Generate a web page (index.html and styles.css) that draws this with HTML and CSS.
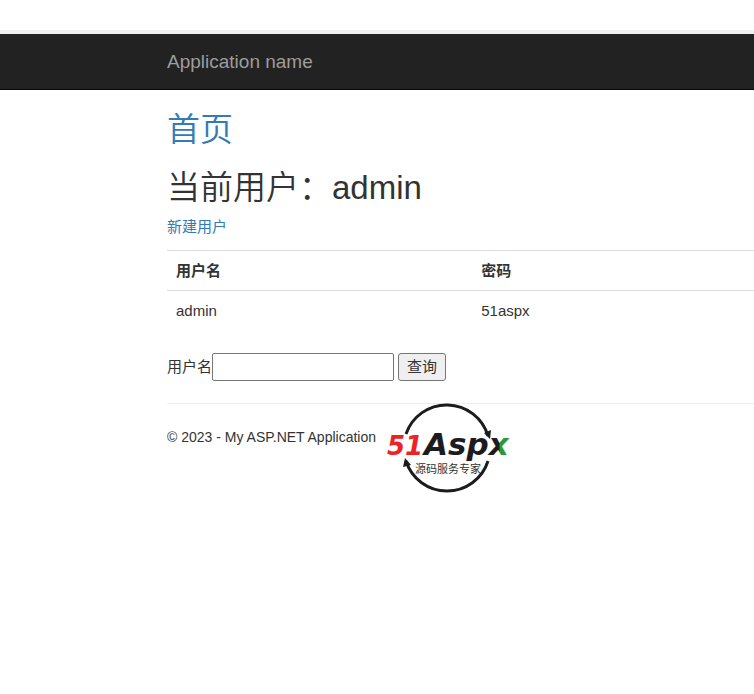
FILE: index.html
```html
<!DOCTYPE html>
<html lang="zh-CN">

<head>
    <meta charset="UTF-8">
    <meta name="viewport" content="width=device-width, initial-scale=1.0">
    <title>首页 - My ASP.NET Application</title>
    <link rel="stylesheet" href="styles.css">
</head>

<body>
    <header class="navbar">
        <a class="navbar-brand" href="#">Application name</a>
    </header>

    <main class="container">
        <h2><a href="#">首页</a></h2>
        <h2>当前用户：admin</h2>
        <a href="#">新建用户</a>

        <table class="table">
            <thead>
                <tr>
                    <th scope="col">用户名</th>
                    <th scope="col">密码</th>
                </tr>
            </thead>
            <tbody>
                <tr>
                    <td>admin</td>
                    <td>51aspx</td>
                </tr>
            </tbody>
        </table>

        <form class="search-form" action="#">
            <label for="userName">用户名</label>
            <input type="text" id="userName" name="userName">
            <button type="submit">查询</button>
        </form>
    </main>

    <footer class="container footer">
        <p>&copy; 2023 - My ASP.NET Application</p>
        <svg class="logo" width="130" height="90" viewBox="0 0 130 90" role="img" aria-label="51Aspx">
            <defs>
                <linearGradient id="xFill" gradientUnits="userSpaceOnUse" x1="113" y1="0" x2="114" y2="0">
                    <stop offset="0" stop-color="#1c1c1e" />
                    <stop offset="1" stop-color="#2a9a35" />
                </linearGradient>
            </defs>
            <path d="M20 31A43 43 0 0 1 102 33M102 58A43 43 0 0 1 20 58" fill="none" stroke="#1c1c1e" stroke-width="3" />
            <path d="M98 30l6 6 1-9zM17 64l2-9 6 7z" fill="#1c1c1e" />
            <text class="logo-number" x="1" y="52">51</text>
            <text class="logo-name" x="38" y="52">Asp<tspan fill="url(#xFill)">x</tspan></text>
            <text class="logo-slogan" x="29" y="70">源码服务专家</text>
        </svg>
    </footer>
</body>

</html>
```

FILE: styles.css
```css
/* General Styles */
* {
    box-sizing: border-box;
}

body {
    font-family: "Liberation Sans", Arial, "Noto Sans CJK SC", sans-serif;
    font-size: 15px;
    line-height: 22px;
    margin: 0;
    padding-top: 30px;
    color: #333;
    background-color: #fff;
}

a {
    color: #337ab7;
    text-decoration: none;
}

h2 {
    margin: 0 0 22px;
    font-size: 33px;
    font-weight: 350;
    line-height: 36px;
}

h2 + h2 {
    margin-bottom: 10px;
}

.container {
    padding-left: 167px;
}

/* Navbar */
.navbar {
    padding: 16px 0 16px 167px;
    background-color: #222;
    border-top: 4px solid #f0f0f0;
    border-bottom: 1px solid #080808;
    margin-bottom: 22px;
}

.navbar-brand {
    display: block;
    color: #9d9d9d;
    font-size: 19px;
    line-height: 23px;
}

/* Table */
.table {
    width: 100%;
    margin: 12px 0 23px;
    border-collapse: collapse;
    table-layout: fixed;
    line-height: 21px;
}

.table th,
.table td {
    padding: 9px;
    text-align: left;
    border-top: 1px solid #ddd;
}

.table th:first-child {
    width: 52%;
}

/* Search form */
.search-form {
    display: flex;
    align-items: center;
}

.search-form input {
    width: 182px;
    height: 28px;
    margin-right: 4px;
    padding: 1px 2px;
    font: inherit;
    border: 1px solid #767676;
    border-radius: 2px;
}

.search-form button {
    height: 28px;
    padding: 0 8px;
    font: inherit;
    color: #333;
    background-color: #efefef;
    border: 1px solid #767676;
    border-radius: 3px;
}

/* Footer */
.footer {
    display: flex;
    align-items: flex-start;
    gap: 10px;
    margin-top: 22px;
    background: linear-gradient(#eee, #eee) 167px 0 / 100% 1px no-repeat;
}

.footer p {
    margin: 23px 0 0;
    font-size: 14px;
}

.logo {
    overflow: visible;
}

.logo-number,
.logo-name {
    font-family: "DejaVu Sans", sans-serif;
    font-style: italic;
    font-weight: bold;
}

.logo-number {
    font-size: 26px;
    fill: #ee2125;
}

.logo-name {
    font-size: 31px;
    fill: #1c1c1e;
}

.logo-slogan {
    font-family: "Noto Sans CJK SC", sans-serif;
    font-size: 11px;
    fill: #333;
}
```
